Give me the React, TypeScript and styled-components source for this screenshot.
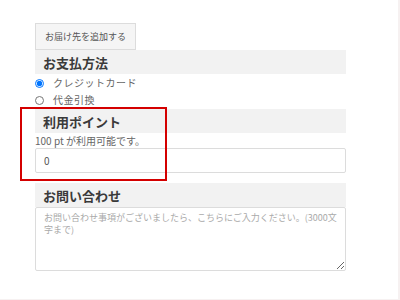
import React from 'react'
import { styled, createGlobalStyle } from 'styled-components'

const GlobalStyle = createGlobalStyle`
  body {
    margin: 0;
    background: #fff;
    font-family: "Noto Sans CJK JP", "Noto Sans", sans-serif;
  }
`

export default function App() {
  return (
    <>
      <GlobalStyle />
      <Page>
        <Form>
          <AddButton type='button'>お届け先を追加する</AddButton>

          <SectionTitle>お支払方法</SectionTitle>
          <RadioList>
            <RadioRow>
              <input type='radio' name='pay' defaultChecked />
              <span>クレジットカード</span>
            </RadioRow>
            <RadioRow>
              <input type='radio' name='pay' />
              <span>代金引換</span>
            </RadioRow>
          </RadioList>

          <SectionTitle $top={1}>利用ポイント</SectionTitle>
          <Note>100 pt が利用可能です。</Note>
          <TextInput defaultValue='0' />

          <SectionTitle $top={10}>お問い合わせ</SectionTitle>
          <TextArea placeholder='お問い合わせ事項がございましたら、こちらにご入力ください。(3000文字まで)' />
        </Form>

        <Highlight />
      </Page>
    </>
  )
}

const Page = styled.div`
  position: relative;
  width: 400px;
  height: 300px;
  box-sizing: border-box;
  border-right: 2px solid #f6f1f1;
  border-bottom: 1px solid #f6f1f1;
  overflow: hidden;
`

const Form = styled.div`
  margin-left: 35px;
  width: 311px;
  padding-top: 23px;
  display: flex;
  flex-direction: column;
  align-items: flex-start;
`

const AddButton = styled.button`
  height: 27px;
  padding: 0 9px;
  background: #f5f5f5;
  border: 1px solid #dcdcdc;
  font-family: inherit;
  font-size: 9px;
  color: #555;
  cursor: pointer;
`

const SectionTitle = styled.div<{ $top?: number }>`
  align-self: stretch;
  height: 24px;
  margin-top: ${(p) => p.$top ?? 0}px;
  padding-left: 8px;
  display: flex;
  align-items: center;
  background: #f2f2f2;
  font-size: 13px;
  font-weight: 700;
  color: #3a3a3a;
`

const RadioList = styled.div`
  display: flex;
  flex-direction: column;
`

const RadioRow = styled.label`
  height: 17px;
  display: flex;
  align-items: center;
  gap: 9px;
  font-size: 10px;
  letter-spacing: 0.5px;
  color: #666;

  input {
    width: 9px;
    height: 9px;
    margin: 1px 0 0 0;
  }
`

const Note = styled.div`
  height: 15px;
  line-height: 15px;
  font-size: 10px;
  color: #666;
`

const TextInput = styled.input`
  align-self: stretch;
  height: 25px;
  box-sizing: border-box;
  padding: 0 8px;
  border: 1px solid #dcdcdc;
  border-radius: 2px;
  font-family: inherit;
  font-size: 10px;
  color: #555;
  outline: none;
`

const TextArea = styled.textarea`
  align-self: stretch;
  height: 64px;
  box-sizing: border-box;
  padding: 4px 8px;
  border: 1px solid #dcdcdc;
  border-radius: 2px;
  font-family: inherit;
  font-size: 9px;
  line-height: 12px;
  color: #333;
  outline: none;

  &::placeholder {
    color: #aaa;
  }
`

const Highlight = styled.div`
  position: absolute;
  left: 20px;
  top: 107px;
  width: 147px;
  height: 74px;
  box-sizing: border-box;
  border: 2px solid #d40000;
  pointer-events: none;
`
